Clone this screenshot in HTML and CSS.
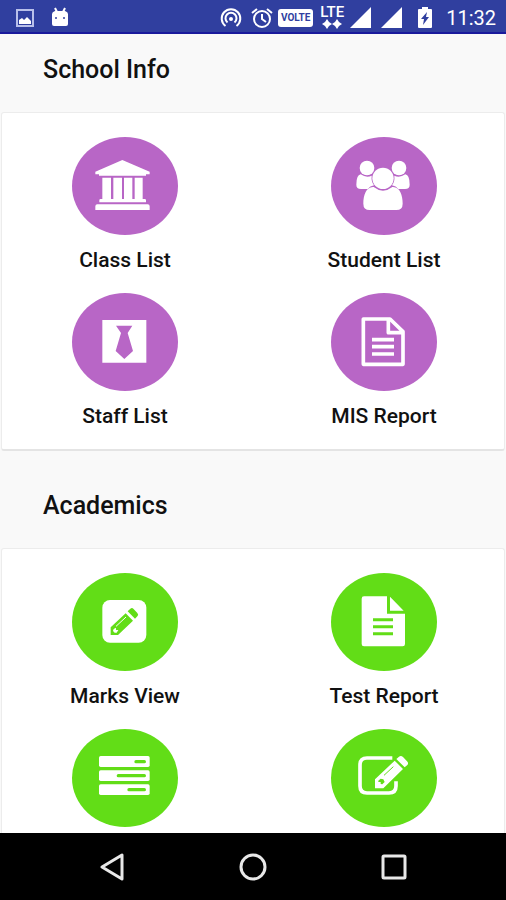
FILE: index.html
```html
<!DOCTYPE html>
<html lang="en">
<head>
<meta charset="utf-8">
<meta name="viewport" content="width=device-width, initial-scale=1">
<title>School Info</title>
<link rel="stylesheet" href="styles.css">
</head>
<body>
<div class="app">
  <header class="status">
    <div class="status-left">
      <svg width="18" height="18" viewBox="0 0 18 18"><rect x="1" y="1" width="16" height="16" fill="none" stroke="#b9c0ea" stroke-width="2"/><path d="M3 15v-4l3-2 2 2 3-3 4 4v3z" fill="#fff"/></svg>
      <svg width="18" height="21" viewBox="0 0 18 21" fill="#fff"><path d="M4 1l2 4M14 1l-2 4" stroke="#fff" stroke-width="2"/><path d="M1 7q0-2 3-3h10q3 1 3 3v10q0 2-2 2H3q-2 0-2-2z"/><circle cx="5" cy="11" r="1" fill="#303f9f"/><circle cx="13" cy="11" r="1" fill="#303f9f"/></svg>
    </div>
    <div class="status-right">
      <svg width="22" height="22" viewBox="0 0 22 22" fill="none" stroke="#fff" stroke-width="2"><path d="M5.500 19a9.300 9.300 0 1 1 11 0M7.500 15.500a5.500 5.500 0 1 1 7 0"/><circle cx="11" cy="12" r="2" fill="#fff" stroke="none"/></svg>
      <svg class="alarm" width="22" height="22" viewBox="0 0 22 22" fill="none" stroke="#fff" stroke-width="2"><circle cx="11" cy="12" r="8"/><path d="M1 6l5-4M21 6l-5-4M11 7v5l4 3"/></svg>
      <span class="volte">VOLTE</span>
      <span class="lte">LTE<svg width="20" height="10" viewBox="0 0 20 10" fill="#fff"><path d="M5 0l2 3 3 2-3 2-2 3-2-3-3-2 3-2zM15 0l2 3 3 2-3 2-2 3-2-3-3-2 3-2z"/></svg></span>
      <svg class="signal" width="21" height="21" viewBox="0 0 21 21"><path d="M21 0v21H0z" fill="#fff"/></svg>
      <svg class="signal-two" width="21" height="21" viewBox="0 0 21 21"><path d="M21 0v21H0z" fill="#fff"/></svg>
      <svg class="battery" width="14" height="21" viewBox="0 0 14 21"><path d="M4 0h6v2h3q1 0 1 1v17q0 1-1 1H1q-1 0-1-1V3q0-1 1-1h3z" fill="#fff"/><path d="M9 5l-6 7h3l-1 6 6-8H8z" fill="#303f9f"/></svg>
      <time>11:32</time>
    </div>
  </header>

  <main class="content">
    <section class="info">
      <h2>School Info</h2>
      <div class="card">
        <a class="tile" href="#class-list">
          <svg class="disc purple" viewBox="66 36 318 294" fill="#fff"><path d="M217 105l82 35v8h-11v4H147v-4h-11v-8zM157 158h26v64h7v-64h26v64h6v-64h25v64h7v-64h24v64h6q4 0 4 4v6H148v-6q0-4 4-4h5zM142 238h151q6 0 6 6v11H136v-11q0-6 6-6z"/></svg>
          <span>Class List</span>
        </a>
        <a class="tile" href="#student-list">
          <svg class="disc purple" viewBox="63 36 318 294" fill="#fff"><circle cx="171" cy="129" r="22"/><circle cx="267" cy="129" r="22"/><path d="M152 148q17 12 33 4-2 18 7 29-12 2-19 11h-20q-14 0-14-13 0-29 13-31zM286 148q-17 12-33 4 2 18-7 29 12 2 19 11h20q14 0 14-13 0-29-13-31z"/><circle cx="219" cy="160" r="32"/><path d="M191 186q28 22 56 0c22-2 31 24 31 50q0 19-19 19h-80q-19 0-19-19c0-26 9-52 31-50z"/></svg>
          <span>Student List</span>
        </a>
        <a class="tile" href="#staff-list">
          <svg class="disc purple" viewBox="66 24 318 294"><path d="M157 105h132v128H157z" fill="#fff"/><path d="M198 122h49l-14 22 16 54-26 24-26-24 16-54z" fill="#b866c6"/></svg>
          <span>Staff List</span>
        </a>
        <a class="tile" href="#mis-report">
          <svg class="disc purple" viewBox="63 24 318 294" fill="none" stroke="#fff" stroke-width="11" stroke-linejoin="round"><path d="M160 102h80l39 38v98H160zM235 102v41h44M186 164h66M186 185h66M186 207h66"/></svg>
          <span>MIS Report</span>
        </a>
      </div>
    </section>

    <section class="academics">
      <h2>Academics</h2>
      <div class="card">
        <a class="tile" href="#marks-view">
          <svg class="disc green" viewBox="66 39 318 294"><rect x="157" y="120" width="132" height="128" rx="23" fill="#fff"/><path d="M182 202l45-42 22 22-45 43h-22zM233 154l8-8q5-4 9 0l12 13q5 5 0 10l-7 7z" fill="#62dd17"/><path d="M198 199l30-28" stroke="#fff" stroke-width="3"/><path d="M191 207l7-4v7h7l-5 8h-6l-5-5z" fill="#fff"/></svg>
          <span>Marks View</span>
        </a>
        <a class="tile" href="#test-report">
          <svg class="disc green" viewBox="63 39 318 294"><path d="M162 109h69v52h54v91q0 7-7 7H162q-7 0-7-7V116q0-7 7-7zM240 110l41 42h-41z" fill="#fff"/><path d="M189 179h60M189 200h60M189 221h60" stroke="#62dd17" stroke-width="9"/></svg>
          <span>Test Report</span>
        </a>
        <a class="tile" href="#records" aria-label="Records">
          <svg class="disc green" viewBox="66 27 318 294"><g fill="#fff"><rect x="147" y="108" width="152" height="33" rx="5"/><rect x="147" y="151" width="152" height="32" rx="5"/><rect x="147" y="193" width="152" height="32" rx="5"/></g><path d="M258 125h25M205 167h78M237 209h46" stroke="#62dd17" stroke-width="10" stroke-linecap="round"/></svg>
        </a>
        <a class="tile" href="#edit" aria-label="Edit">
          <svg class="disc green" viewBox="63 27 318 294"><path d="M247 114h-76q-21 0-21 21v63q0 21 21 21h66q21 0 21-21v-14" fill="none" stroke="#fff" stroke-width="11"/><path d="M195 178l59-56 25 25-59 58h-25zM259 117l8-7q6-4 12 1l12 13q6 6 1 11l-8 7z" fill="#fff"/><path d="M222 166l28-26" stroke="#62dd17" stroke-width="3"/><path d="M205 182l7-6 8 2 4 8-7 7-5-1v-6h-7z" fill="#62dd17"/></svg>
        </a>
      </div>
    </section>
  </main>

  <nav class="navbar">
    <button type="button" aria-label="Back"><svg width="28" height="28" viewBox="0 0 28 28"><path d="M24 2v24L4 14z"/></svg></button>
    <button type="button" aria-label="Home"><svg width="28" height="28" viewBox="0 0 28 28"><circle cx="14" cy="14" r="12"/></svg></button>
    <button type="button" aria-label="Recent apps"><svg width="28" height="28" viewBox="0 0 28 28"><rect x="3" y="3" width="22" height="22" rx="1"/></svg></button>
  </nav>
</div>
</body>
</html>
```
FILE: styles.css
```css
* {
  box-sizing: border-box;
}

body {
  margin: 0;
  font-family: Roboto, "Liberation Sans", sans-serif;
  color: #111;
  background: #f9f9f9;
}

svg {
  display: block;
  flex: none;
}

.app {
  display: flex;
  flex-direction: column;
  height: 100vh;
}

.status {
  flex: none;
  display: flex;
  align-items: center;
  justify-content: space-between;
  height: 34px;
  padding: 3px 10px 0 16px;
  color: #fff;
  background: #303f9f;
  border-bottom: 2px solid #1a1a9c;
}

.status-left {
  display: flex;
  align-items: center;
  gap: 17px;
}

.status-right {
  display: flex;
  align-items: center;
}

.alarm {
  margin-left: 9px;
}

.volte {
  width: 35px;
  margin-left: 5px;
  border-radius: 3px;
  font-size: 10px;
  font-weight: 700;
  line-height: 18px;
  text-align: center;
  color: #303f9f;
  background: #fff;
}

.lte {
  display: flex;
  flex-direction: column;
  align-items: center;
  width: 26px;
  margin-left: 6px;
  font-size: 15px;
  font-weight: 500;
  line-height: 13px;
}

.signal {
  margin-left: 5px;
}

.signal-two {
  margin-left: 10px;
}

.battery {
  margin: 0 14px 0 16px;
}

time {
  font-size: 20px;
  line-height: 24px;
}

.content {
  flex: 1;
  min-height: 0;
  overflow: hidden;
}

h2 {
  margin: 0;
  padding: 21px 43px 27px;
  font-size: 25px;
  font-weight: 500;
  line-height: 30px;
}

.academics h2 {
  padding-top: 40px;
}

.card {
  display: grid;
  grid-template-columns: 150px 150px;
  justify-content: space-between;
  row-gap: 20px;
  margin: 0 1px;
  padding: 24px 45px 20px 48px;
  border: 1px solid #ececec;
  border-bottom: 2px solid #e4e4e4;
  border-radius: 3px;
  background: #fff;
}

.tile {
  display: flex;
  flex-direction: column;
  align-items: center;
  gap: 12px;
  font-size: 21px;
  font-weight: 500;
  line-height: 26px;
  color: inherit;
  text-decoration: none;
}

.disc {
  width: 106px;
  height: 98px;
  border-radius: 50%;
}

.purple {
  background: #b866c6;
}

.green {
  background: #62dd17;
}

.navbar {
  flex: none;
  display: flex;
  align-items: center;
  justify-content: space-between;
  height: 67px;
  padding: 0 88px;
  background: #000;
}

.navbar button {
  display: grid;
  place-items: center;
  width: 48px;
  height: 48px;
  padding: 0;
  border: 0;
  background: none;
}

.navbar svg {
  fill: none;
  stroke: #e8e8e8;
  stroke-width: 3;
  stroke-linejoin: round;
}
```
